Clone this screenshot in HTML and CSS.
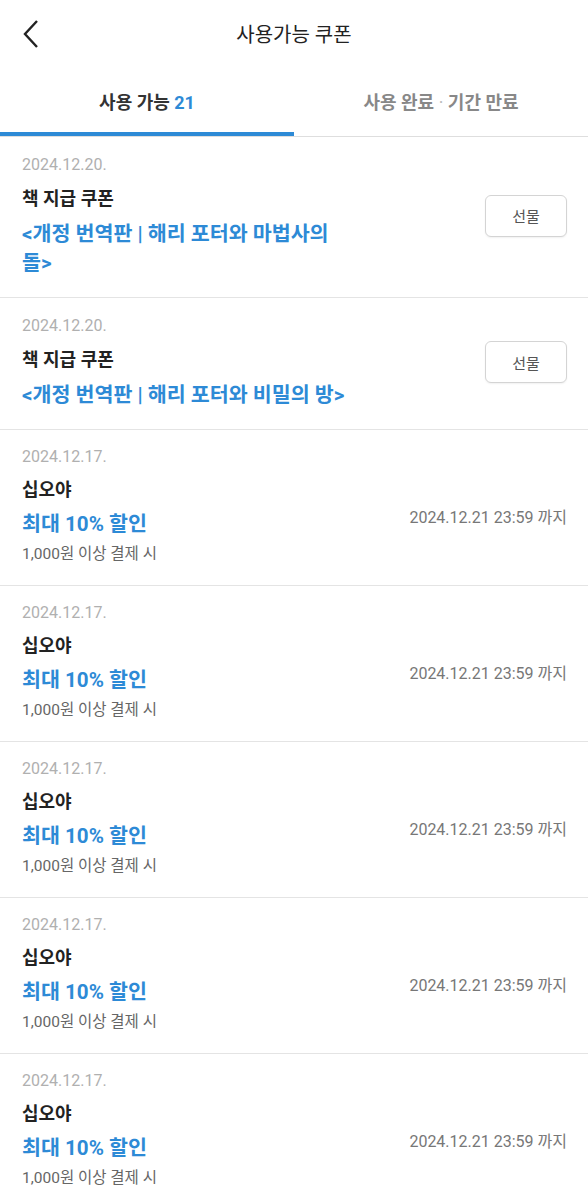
FILE: index.html
```html
<!DOCTYPE html>
<html>
    <head>
        <meta charset="utf-8">
        <link rel="stylesheet" href="styles.css">
    </head>
    <body>
        <div class="header">
            <button class="back">
                <svg width="20" height="30" viewBox="0 0 20 30"><path d="M16 2 L4 15 L16 28" fill="none" stroke="#222" stroke-width="2.4"/></svg>
            </button>
            <h1>사용가능 쿠폰</h1>
        </div>

        <div class="tabs">
            <div class="tab active">사용 가능 <span class="count">21</span></div>
            <div class="tab">사용 완료 <span class="dot">·</span> 기간 만료</div>
        </div>

        <div class="list">
            <div class="coupon book">
                <div class="date">2024.12.20.</div>
                <div class="body">
                    <div class="name">책 지급 쿠폰</div>
                    <div class="benefit">&lt;개정 번역판 | 해리 포터와 마법사의<br>돌&gt;</div>
                </div>
                <button class="gift">선물</button>
            </div>
            <div class="coupon book">
                <div class="date">2024.12.20.</div>
                <div class="body">
                    <div class="name">책 지급 쿠폰</div>
                    <div class="benefit">&lt;개정 번역판 | 해리 포터와 비밀의 방&gt;</div>
                </div>
                <button class="gift">선물</button>
            </div>
            <div class="coupon">
                <div class="date">2024.12.17.</div>
                <div class="body">
                    <div class="name">십오야</div>
                    <div class="benefit">최대 10% 할인</div>
                    <div class="cond">1,000원 이상 결제 시</div>
                </div>
                <div class="expire">2024.12.21 23:59 까지</div>
            </div>
            <div class="coupon">
                <div class="date">2024.12.17.</div>
                <div class="body">
                    <div class="name">십오야</div>
                    <div class="benefit">최대 10% 할인</div>
                    <div class="cond">1,000원 이상 결제 시</div>
                </div>
                <div class="expire">2024.12.21 23:59 까지</div>
            </div>
            <div class="coupon">
                <div class="date">2024.12.17.</div>
                <div class="body">
                    <div class="name">십오야</div>
                    <div class="benefit">최대 10% 할인</div>
                    <div class="cond">1,000원 이상 결제 시</div>
                </div>
                <div class="expire">2024.12.21 23:59 까지</div>
            </div>
            <div class="coupon">
                <div class="date">2024.12.17.</div>
                <div class="body">
                    <div class="name">십오야</div>
                    <div class="benefit">최대 10% 할인</div>
                    <div class="cond">1,000원 이상 결제 시</div>
                </div>
                <div class="expire">2024.12.21 23:59 까지</div>
            </div>
            <div class="coupon">
                <div class="date">2024.12.17.</div>
                <div class="body">
                    <div class="name">십오야</div>
                    <div class="benefit">최대 10% 할인</div>
                    <div class="cond">1,000원 이상 결제 시</div>
                </div>
                <div class="expire">2024.12.21 23:59 까지</div>
            </div>
        </div>
    </body>
</html>
```

FILE: styles.css
```css
body{
    margin:0;
    background:#fff;
    font-family: Roboto, "Noto Sans CJK KR", sans-serif;
    color:#222;
}

/* top bar */
.header{
    height:70px;
    display:flex;
    align-items:center;
    justify-content:center;
    position:relative;
}
.header h1{
    margin:0;
    font-size:20px;
    font-weight:400;
    color:#222;
    line-height:30px;
}
.back{
    position:absolute;
    left:19px;
    top:19px;
    background:none;
    border:none;
    padding:0;
    width:24px;
    height:32px;
}

/* tabs */
.tabs{
    display:flex;
    border-bottom:1px solid #dedede;
}
.tab{
    flex:1;
    text-align:center;
    font-size:18px;
    font-weight:700;
    color:#888;
    line-height:24px;
    padding:21px 0 17px;
    border-bottom:4px solid transparent;
}
.tab.active{
    color:#333;
    border-bottom-color:#2d8ad6;
}
.count{
    color:#2d8ad6;
}
.dot{
    color:#bbb;
    font-weight:400;
}

/* coupon rows */
.coupon{
    display:grid;
    grid-template-columns:1fr auto;
    padding:17px 21px 21px 22px;
    border-bottom:1px solid #e4e4e4;
}
.coupon.book{
    padding-top:18px;
    padding-bottom:19px;
}
.date{
    grid-column:1;
    grid-row:1;
    font-size:16px;
    line-height:20px;
    color:#b0b0b0;
}
.body{
    grid-column:1;
    grid-row:2;
}
.name{
    margin-top:11px;
    font-size:18px;
    font-weight:700;
    line-height:24px;
    color:#222;
}
.benefit{
    margin-top:8px;
    font-size:20.6px;
    font-weight:700;
    line-height:29px;
    color:#2d8ad6;
}
.book .name{
    margin-top:12px;
}
.book .benefit{
    margin-top:9px;
}
.cond{
    margin-top:5px;
    font-size:15.5px;
    line-height:20px;
    color:#666;
}
.gift{
    grid-column:2;
    grid-row:1 / 3;
    align-self:center;
    margin-top:-2px;
    width:82px;
    height:42px;
    background:#fff;
    border:1px solid #d4d4d4;
    border-radius:6px;
    font-family: Roboto, "Noto Sans CJK KR", sans-serif;
    font-size:15px;
    color:#555;
    box-shadow:0 1px 2px rgba(0,0,0,0.06);
}
.expire{
    grid-column:2;
    grid-row:2;
    align-self:center;
    font-size:16px;
    color:#777;
}
```
